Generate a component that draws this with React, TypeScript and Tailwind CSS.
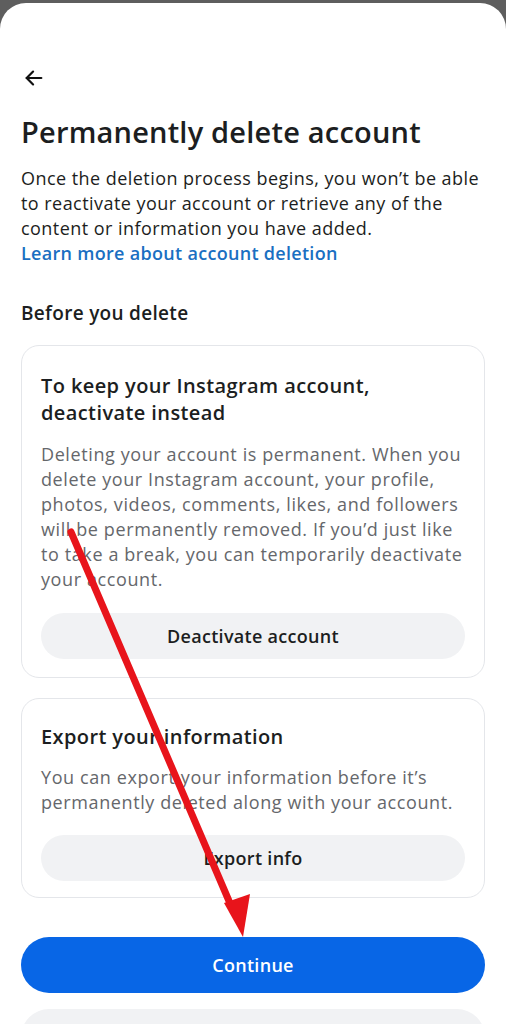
import React from "react";

export default function App() {
  const font = { fontFamily: "'Open Sans', 'Noto Sans', sans-serif" };
  return (
    <div className="relative w-[506px] h-[1024px] overflow-hidden bg-[#5e5e5e] pt-[3px]" style={font}>
      <div className="h-full rounded-t-[26px] bg-white px-[21px]">
        <div className="pt-[64px] h-[88px]">
          <svg width="22" height="22" viewBox="0 0 24 24" className="ml-[2px]" fill="none" stroke="#111" strokeWidth="2.4" strokeLinecap="round" strokeLinejoin="round">
            <path d="M20 12H4" />
            <path d="M11 5l-7 7 7 7" />
          </svg>
        </div>
        <h1 className="mt-[24px] text-[29px] leading-[34px] font-semibold text-[#1c1e21] tracking-[0.2px]">Permanently delete account</h1>
        <p className="mt-[17px] mr-[-4px] text-[18px] leading-[25px] text-[#1c1e21] tracking-[0.45px]">
          Once the deletion process begins, you won’t be able to reactivate your account or retrieve any of the content or information you have added.
        </p>
        <p className="text-[18px] leading-[25px] font-semibold text-[#1a6fc2] tracking-[0.3px]">Learn more about account deletion</p>
        <p className="mt-[34px] text-[19px] leading-[26px] font-semibold text-[#1c1e21] tracking-[0.3px]">Before you delete</p>

        <div className="mt-[19px] rounded-[18px] border border-[#e4e6ea] px-[19px] pt-[26px] pb-[18px]">
          <p className="text-[20px] leading-[27px] font-semibold text-[#1c1e21] tracking-[0.4px]">To keep your Instagram account, deactivate instead</p>
          <p className="mt-[16px] text-[18px] leading-[25px] text-[#65676b] tracking-[0.6px]">
            Deleting your account is permanent. When you delete your Instagram account, your profile, photos, videos, comments, likes, and followers will be permanently removed. If you’d just like to take a break, you can temporarily deactivate your account.
          </p>
          <div className="mt-[21px] flex h-[46px] items-center justify-center rounded-full bg-[#f1f2f4] text-[18px] font-semibold text-[#1c1e21] tracking-[0.3px]">
            Deactivate account
          </div>
        </div>

        <div className="mt-[20px] rounded-[18px] border border-[#e4e6ea] px-[19px] pt-[24px] pb-[16px]">
          <p className="text-[20px] leading-[27px] font-semibold text-[#1c1e21] tracking-[0.4px]">Export your information</p>
          <p className="mt-[15px] text-[18px] leading-[25px] text-[#65676b] tracking-[0.6px]">
            You can export your information before it’s permanently deleted along with your account.
          </p>
          <div className="mt-[20px] flex h-[46px] items-center justify-center rounded-full bg-[#f1f2f4] text-[18px] font-semibold text-[#1c1e21] tracking-[0.3px]">
            Export info
          </div>
        </div>

        <div className="mt-[39px] flex h-[56px] items-center justify-center rounded-full bg-[#0866e6] text-[18px] font-semibold text-white tracking-[0.3px]">
          Continue
        </div>
        <div className="mt-[16px] h-[56px] rounded-full bg-[#f1f2f4]" />
      </div>

      <svg className="pointer-events-none absolute left-0 top-0" width="506" height="1024" viewBox="0 0 506 1024">
        <line x1="71" y1="532" x2="232" y2="908" stroke="#e8141b" strokeWidth="7" strokeLinecap="round" />
        <polygon points="243,937 224,903 250,894" fill="#e8141b" />
      </svg>
    </div>
  );
}
